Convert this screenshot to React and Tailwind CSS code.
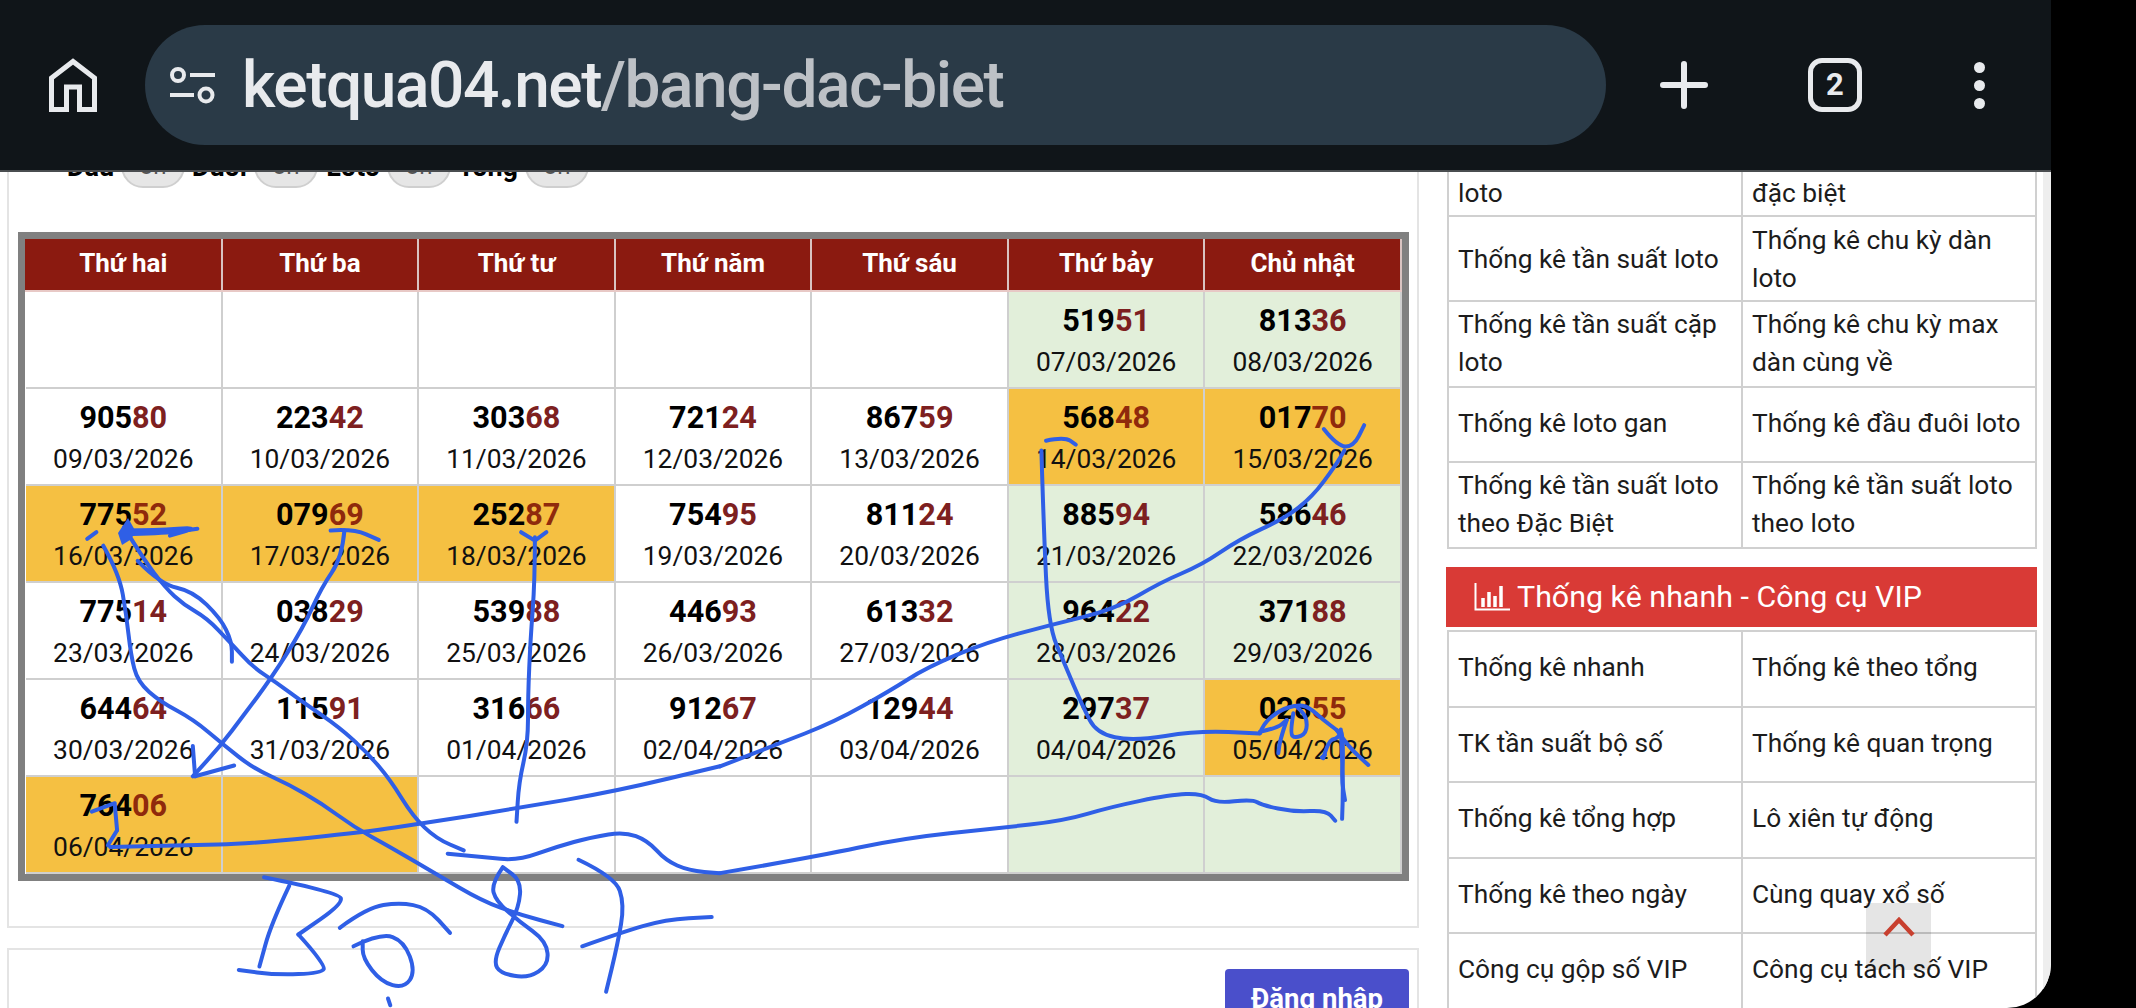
import React from 'react';

const z3 = ([x, y]) => [x / 2.178, 480 + y / 2.97];
const z4 = ([x, y]) => [720 + x / 2.178, 400 + y / 2.579];
const z5 = ([x, y]) => [1180 + x / 3, 670 + y / 3];

// smooth line through the points
const toPath = (pts) => {
  let d = `M${pts[0][0].toFixed(1)} ${pts[0][1].toFixed(1)}`;
  for (let i = 1; i < pts.length - 1; i++) {
    const mx = (pts[i][0] + pts[i + 1][0]) / 2;
    const my = (pts[i][1] + pts[i + 1][1]) / 2;
    d += ` Q${pts[i][0].toFixed(1)} ${pts[i][1].toFixed(1)} ${mx.toFixed(1)} ${my.toFixed(1)}`;
  }
  const last = pts[pts.length - 1];
  return `${d} L${last[0].toFixed(1)} ${last[1].toFixed(1)}`;
};

const strokesA = [
  [[270,140],[310,230],[360,320],[400,370],[450,410],[500,480],[550,555],[600,600],[660,660],[740,735],[800,810],[850,890],[900,1000],[950,1065],[1010,1100]],
  [[270,150],[340,150],[435,140],[370,165]],
  [[290,160],[360,158],[430,145]],
  [[190,175],[210,155]],
  [[225,195],[260,280],[275,400],[285,520],[300,600],[350,660],[420,710],[490,790],[550,855],[630,905],[700,960],[770,1030],[850,1090],[950,1170],[1050,1250],[1130,1290],[1225,1325]],
  [[300,240],[350,310],[420,330],[480,410],[505,480],[505,540]],
  [[720,150],[770,145],[825,178]],
  [[750,150],[745,230],[700,320],[660,440],[590,590],[530,700],[480,790],[420,880]],
  [[420,790],[425,880]],
  [[425,880],[510,848]],
  [[1135,155],[1165,180]],
  [[1165,180],[1190,155]],
  [[1165,170],[1165,300],[1155,480],[1150,640],[1150,780],[1130,900],[1125,1015]],
  [[200,985],[250,960]],
  [[250,965],[255,1040]],
  [[255,1040],[235,1085]],
  [[240,1090],[400,1085],[550,1080],[800,1045],[920,1020],[1125,975],[1340,925],[1568,850]],
  [[975,1110],[1050,1120],[1130,1130],[1210,1090],[1290,1060],[1360,1045],[1410,1070],[1450,1130],[1500,1160],[1568,1168]],
  [[575,1180],[740,1225],[745,1260],[650,1350]],
  [[650,1350],[710,1440],[700,1465],[600,1470],[520,1455]],
  [[630,1205],[590,1320],[565,1445]],
  [[740,1330],[800,1270],[870,1255],[930,1270],[980,1345]],
  [[770,1385],[830,1345],[880,1370],[905,1460],[880,1510],[830,1490],[790,1420],[790,1370]],
  [[845,1540],[850,1560]],
  [[1095,1150],[1070,1200],[1080,1250],[1130,1310],[1190,1370],[1195,1440],[1150,1480],[1090,1465],[1075,1430],[1100,1350],[1130,1270],[1135,1190],[1095,1150]],
  [[1260,1128],[1340,1180],[1360,1260],[1345,1380],[1320,1520]],
  [[1268,1385],[1350,1345],[1450,1305],[1550,1298]],
];

const strokesB = [
  [[0,945],[120,890],[250,830],[370,750],[450,690],[580,625],[720,580],[860,540],[960,470],[1050,425],[1130,360],[1230,305],[1290,250],[1340,170],[1360,130]],
  [[1315,75],[1345,120],[1380,120],[1403,65]],
  [[0,1220],[200,1180],[400,1130],[600,1105],[750,1085],[850,1050],[980,1018],[1050,1015],[1080,1040],[1160,1030],[1180,1045],[1250,1062],[1320,1058],[1340,1085]],
  [[1355,1080],[1358,1000],[1352,850]],
  [[710,105],[750,95],[775,115]],
  [[700,130],[705,330],[715,580],[750,680],[790,790],[820,860],[900,880],[1040,853],[1175,860]],
];

// the tangle over 02855
const strokesC = [
  [[240,190],[250,160],[300,120],[350,105],[385,110],[430,150],[470,180]],
  [[240,185],[290,175],[320,150]],
  [[320,150],[300,210],[295,250]],
  [[340,130],[330,190],[345,205],[380,190],[380,140],[350,110]],
  [[470,180],[505,230],[565,285]],
  [[430,265],[445,210],[475,205],[485,175],[490,250],[485,330],[495,390]],
  [[425,262],[435,255]],
];

const Scribble = () => (
  <svg className="absolute left-0 top-0 pointer-events-none" width="2136" height="1008" fill="none">
    <g stroke="#2f5fe6" strokeWidth="4" strokeLinecap="round" strokeLinejoin="round">
      {strokesA.map((s, i) => (
        <path key={i} d={toPath(s.map(z3))} />
      ))}
      {strokesB.map((s, i) => (
        <path key={i} d={toPath(s.map(z4))} />
      ))}
      {strokesC.map((s, i) => (
        <path key={i} d={toPath(s.map(z5))} />
      ))}
    </g>
    <path d="M118 533 L128 518 L136 532 L130 540 L122 545 Z" fill="#2f5fe6" />
  </svg>
);

const DAYS = ['Thứ hai', 'Thứ ba', 'Thứ tư', 'Thứ năm', 'Thứ sáu', 'Thứ bảy', 'Chủ nhật'];

// g = green weekend cell, o = orange highlighted cell
const ROWS = [
  [null, null, null, null, null, { n: '51951', d: '07/03/2026', c: 'g' }, { n: '81336', d: '08/03/2026', c: 'g' }],
  [{ n: '90580', d: '09/03/2026' }, { n: '22342', d: '10/03/2026' }, { n: '30368', d: '11/03/2026' }, { n: '72124', d: '12/03/2026' }, { n: '86759', d: '13/03/2026' }, { n: '56848', d: '14/03/2026', c: 'o' }, { n: '01770', d: '15/03/2026', c: 'o' }],
  [{ n: '77552', d: '16/03/2026', c: 'o' }, { n: '07969', d: '17/03/2026', c: 'o' }, { n: '25287', d: '18/03/2026', c: 'o' }, { n: '75495', d: '19/03/2026' }, { n: '81124', d: '20/03/2026' }, { n: '88594', d: '21/03/2026', c: 'g' }, { n: '58646', d: '22/03/2026', c: 'g' }],
  [{ n: '77514', d: '23/03/2026' }, { n: '03829', d: '24/03/2026' }, { n: '53988', d: '25/03/2026' }, { n: '44693', d: '26/03/2026' }, { n: '61332', d: '27/03/2026' }, { n: '96422', d: '28/03/2026', c: 'g' }, { n: '37188', d: '29/03/2026', c: 'g' }],
  [{ n: '64464', d: '30/03/2026' }, { n: '11591', d: '31/03/2026' }, { n: '31666', d: '01/04/2026' }, { n: '91267', d: '02/04/2026' }, { n: '12944', d: '03/04/2026' }, { n: '29737', d: '04/04/2026', c: 'g' }, { n: '02855', d: '05/04/2026', c: 'o' }],
  [{ n: '76406', d: '06/04/2026', c: 'o' }, { c: 'o' }, null, null, null, { c: 'g' }, { c: 'g' }],
];

const cellBg = (c) => {
  if (c === 'o') return 'bg-[#f5c042]';
  if (c === 'g') return 'bg-[#e2efda]';
  return 'bg-white';
};

const Cell = ({ cell }) => {
  const c = cell || {};
  return (
    <div className={`h-[97px] border-r-2 border-b-2 border-[#cfcfcf] flex flex-col items-center pt-[9px] ${cellBg(c.c)}`}>
      {c.n && (
        <>
          <div className="text-[30.6px] leading-[40px] font-bold text-black">
            {c.n.slice(0, 3)}
            <span className={c.c === 'o' ? 'text-[#8f2a0c]' : 'text-[#7d2020]'}>{c.n.slice(3)}</span>
          </div>
          <div className="text-[26.4px] leading-[40px] mt-[1px] text-[#111]">{c.d}</div>
        </>
      )}
    </div>
  );
};

const ResultTable = () => (
  <div className="mt-[44px] ml-[9px] w-[1391px] border-[7px] border-[#808080]">
    <div className="grid grid-cols-7 bg-[#8b1a10] h-[53px] pl-[1px] border-b-2 border-[#e8c9c6]">
      {DAYS.map((day) => (
        <div key={day} className="flex items-center justify-center pb-[2px] border-r-2 border-[#d9c3c1] text-white font-bold text-[26px]">
          {day}
        </div>
      ))}
    </div>
    <div className="grid grid-cols-7 pl-[1px]">
      {ROWS.flat().map((cell, i) => (
        <Cell key={i} cell={cell} />
      ))}
    </div>
  </div>
);

const Toggle = ({ label, w }) => (
  <div className={`flex items-end justify-end gap-[7px] text-black font-bold text-[27px] leading-none whitespace-nowrap ${w}`}>
    <span className="mb-[7px]">{label}</span>
    <span className="w-[64px] h-[44px] shrink-0 rounded-[22px] bg-[#e6e6e6] border-2 border-[#cfcfcf] flex items-center justify-center text-[#555] font-normal text-[24px]">
      on
    </span>
  </div>
);

const LINKS_A = [
  [['Thống kê chu kỳ gan', 'loto'], ['Thống kê chu kỳ', 'đặc biệt']],
  [['Thống kê tần suất loto'], ['Thống kê chu kỳ dàn', 'loto']],
  [['Thống kê tần suất cặp', 'loto'], ['Thống kê chu kỳ max', 'dàn cùng về']],
  [['Thống kê loto gan'], ['Thống kê đầu đuôi loto']],
  [['Thống kê tần suất loto', 'theo Đặc Biệt'], ['Thống kê tần suất loto', 'theo loto']],
];

const LINKS_B = [
  ['Thống kê nhanh', 'Thống kê theo tổng'],
  ['TK tần suất bộ số', 'Thống kê quan trọng'],
  ['Thống kê tổng hợp', 'Lô xiên tự động'],
  ['Thống kê theo ngày', 'Cùng quay xổ số'],
  ['Công cụ gộp số VIP', 'Công cụ tách số VIP'],
];

const ROW_H = ['h-[85px]', 'h-[85px]', 'h-[86px]', 'h-[75px]', 'h-[86px]'];

const SideCell = ({ lines, pad = 'pb-[3px]' }) => (
  <div className={`flex flex-col justify-center pl-[9px] border-r-2 border-[#d0d0d0] text-[26.3px] leading-[38px] text-[#1c1c1c] ${pad}`}>
    {lines.map((l) => (
      <div key={l}>{l}</div>
    ))}
  </div>
);

const Sidebar = () => (
  <div className="w-[591px] ml-[27px] -mt-[40px] shrink-0">
    <div className="border-l-2 border-[#d0d0d0] ml-[1px]">
      {LINKS_A.map((row, i) => (
        <div key={i} className={`grid grid-cols-2 border-b-2 border-[#d0d0d0] ${ROW_H[i]}`}>
          <SideCell lines={row[0]} pad={i < 2 ? 'pt-[1px]' : 'pb-[3px]'} />
          <SideCell lines={row[1]} pad={i < 2 ? 'pt-[1px]' : 'pb-[3px]'} />
        </div>
      ))}
    </div>
    <div className="mt-[18px] h-[60px] bg-[#d93a36] flex items-center pl-[28px] gap-[7px] text-white text-[30.4px]">
      <svg width="36" height="28" viewBox="0 0 36 28" fill="none" stroke="#fff">
        <path d="M1.5 0v26.5H36" strokeWidth="2" />
        <path d="M9 24V15M15 24V9M21 24V13M27 24V3" strokeWidth="3.5" />
      </svg>
      <span>Thống kê nhanh - Công cụ VIP</span>
    </div>
    <div className="mt-[3px] border-l-2 border-t-2 border-[#d0d0d0] ml-[1px]">
      {LINKS_B.map((row) => (
        <div key={row[0]} className="grid grid-cols-2 border-b-2 border-[#d0d0d0] h-[75.5px]">
          <SideCell lines={[row[0]]} />
          <SideCell lines={[row[1]]} />
        </div>
      ))}
    </div>
  </div>
);

const TopBar = () => (
  <div className="h-[172px] shrink-0 bg-[#101519] border-b-2 border-[#4a4d50] flex items-center relative z-10">
    <svg className="ml-[49px] shrink-0" width="48" height="54" viewBox="0 0 48 54" fill="none" stroke="#e8eaed" strokeWidth="5">
      <path d="M2.5 51.5V20L24 3.5 45.5 20v31.5H30.5V29h-13v22.5z" />
    </svg>
    <div className="ml-[48px] w-[1461px] h-[120px] rounded-[60px] bg-[#2a3a47] flex items-center pl-[25px]">
      <svg className="shrink-0" width="45" height="38" viewBox="0 0 45 38" fill="none" stroke="#e8eaed" strokeWidth="4">
        <circle cx="8" cy="9" r="6" />
        <path d="M20 9h25M0 29h24" />
        <circle cx="36" cy="29" r="6.5" />
      </svg>
      <div className="ml-[27px] text-[64px] leading-none font-medium whitespace-nowrap tracking-[-1.45px] mt-[2px]">
        <span className="text-[#e8eaed]">ketqua04.net</span>
        <span className="text-[#bdc1c6]">/bang-dac-biet</span>
      </div>
    </div>
    <svg className="ml-[54px] shrink-0" width="48" height="48" viewBox="0 0 48 48" fill="none" stroke="#e8eaed" strokeWidth="6" strokeLinecap="round">
      <path d="M24 3v42M3 24h42" />
    </svg>
    <div className="ml-[100px] w-[54px] h-[54px] shrink-0 rounded-[14px] border-[5px] border-[#e8eaed] flex items-center justify-center text-[#e8eaed] text-[31px] font-bold">
      2
    </div>
    <div className="ml-[112px] flex flex-col gap-[7px] shrink-0">
      <span className="w-[11px] h-[11px] rounded-full bg-[#e8eaed]" />
      <span className="w-[11px] h-[11px] rounded-full bg-[#e8eaed]" />
      <span className="w-[11px] h-[11px] rounded-full bg-[#e8eaed]" />
    </div>
  </div>
);

const App = () => {
  return (
    <div className="relative w-[2136px] h-[1008px] bg-black overflow-hidden font-['Roboto',sans-serif]">
      <div className="w-[2051px] h-full bg-white rounded-br-[44px] overflow-hidden flex flex-col">
        <TopBar />
        <div className="flex flex-1 min-h-0 overflow-hidden">
          <div className="w-[1412px] ml-[7px] shrink-0">
            <div className="border-x-2 border-b-2 border-[#e4e4e4] h-[756px] overflow-hidden">
              <div className="-mt-[29px] h-[45px] pl-[57px] flex items-end">
                <Toggle label="Đầu" w="w-[119px] mr-[14px]" />
                <Toggle label="Đuôi" w="w-[119px] mr-[14px]" />
                <Toggle label="Loto" w="w-[119px] mr-[19px]" />
                <Toggle label="Tổng" w="w-[119px]" />
              </div>
              <ResultTable />
            </div>
            <div className="mt-[20px] border-x-2 border-t-2 border-[#e4e4e4] h-[120px] flex justify-end pr-[8px] pt-[19px]">
              <div className="w-[184px] h-[70px] pb-[10px] rounded-[4px] bg-[#4a4fcb] text-white font-bold text-[27.5px] flex items-center justify-center">
                Đăng nhập
              </div>
            </div>
          </div>
          <Sidebar />
          <div className="ml-auto w-[8px] shrink-0 bg-[#eeeeee]" />
        </div>
      </div>
      <div className="absolute left-[1866px] top-[903px] w-[65px] h-[67px] bg-black/10 flex items-center justify-center pb-[20px]">
        <svg width="32" height="20" viewBox="0 0 32 20" fill="none" stroke="#c8402f" strokeWidth="4.5">
          <path d="M2 18L16 3l14 15" />
        </svg>
      </div>
      <Scribble />
    </div>
  );
};

export default App;
